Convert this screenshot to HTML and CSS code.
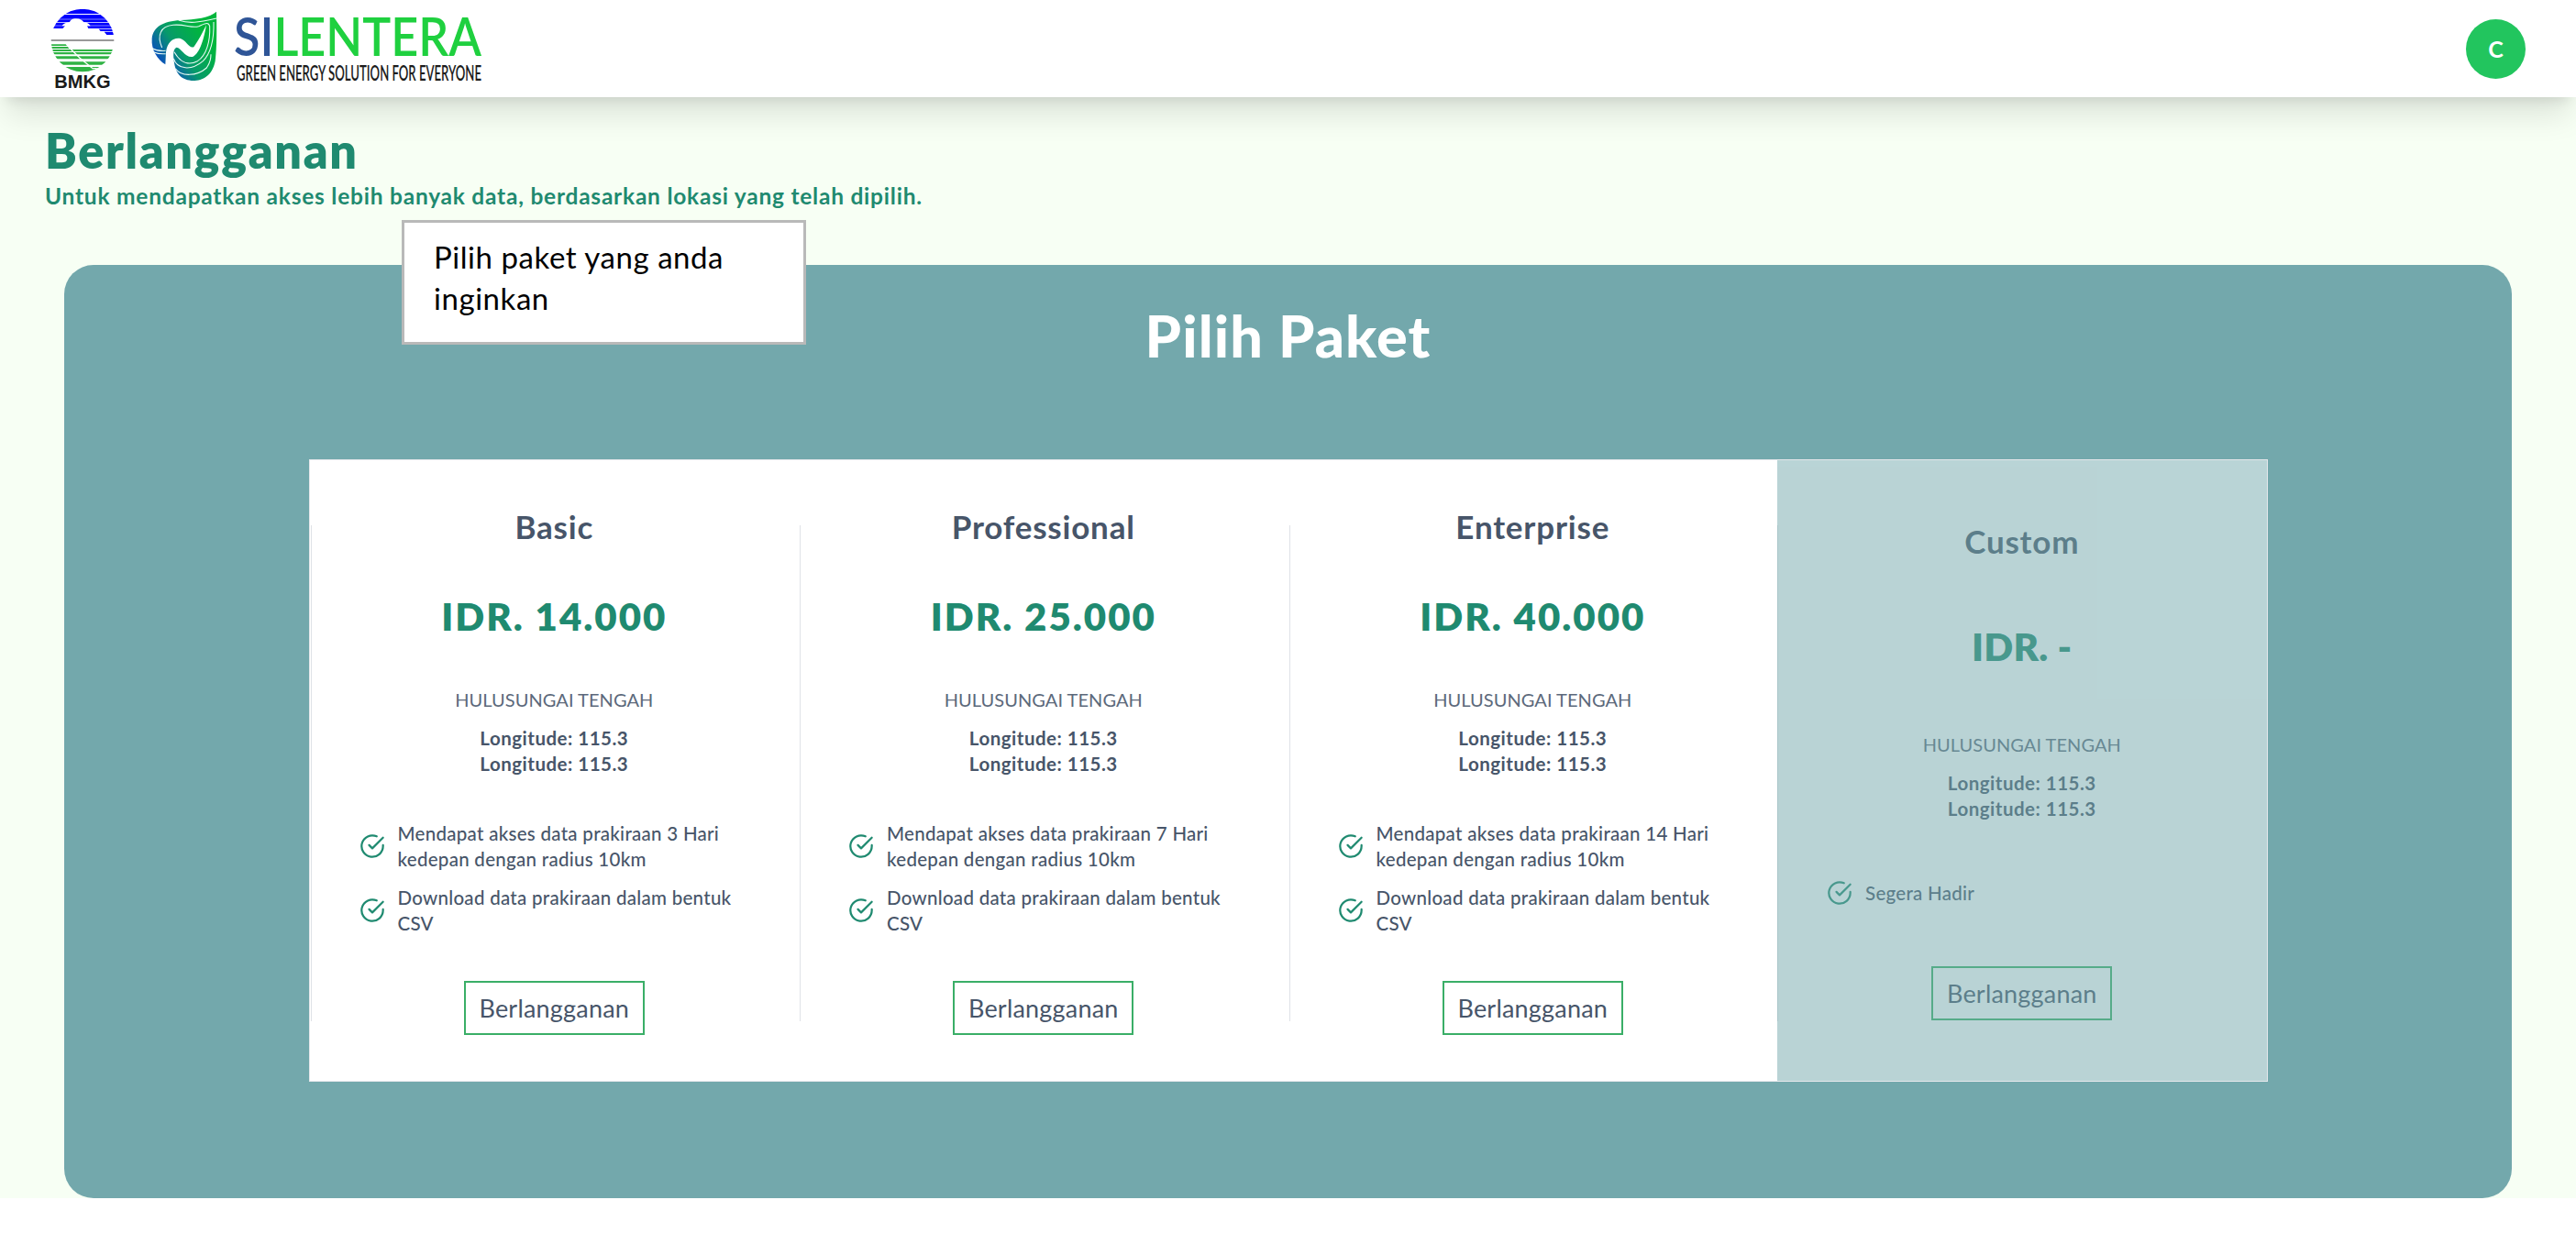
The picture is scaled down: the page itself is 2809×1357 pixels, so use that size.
FILE: index.html
```
<!DOCTYPE html>
<html lang="id">
<head>
<meta charset="utf-8">
<title>Berlangganan - Silentera</title>
<link rel="stylesheet" href="styles.css">
</head>
<body>
<svg class="defs" aria-hidden="true">
  <symbol id="check" viewBox="0 0 24 24" fill="none" stroke="currentColor" stroke-width="1.9" stroke-linecap="round" stroke-linejoin="round">
    <path d="M22 11.08V12a10 10 0 1 1-5.93-9.14"/>
    <path d="M22 4 12 14.01l-3-3"/>
  </symbol>
</svg>

<header class="topbar">
  <div class="brand">
    <svg class="bmkg" width="70" height="90" viewBox="0 0 210 270">
      <defs><clipPath id="globe"><circle cx="105" cy="108" r="103"/></clipPath></defs>
      <g clip-path="url(#globe)">
        <path fill="#0000ff" d="M0 5h210v16H0zM0 24h210v14H0zM0 40h210v8H0zM0 50h210v9H0zM0 61h48l-8 8H0zM120 61h90v8h-86zM158 71h52v7h-46zM176 80h34v10h-26z"/>
        <path fill="#fff" d="M38 61c4-9 16-11 25-13 4-10 14-11 22-11 12 0 20 5 24 12 12 0 18 5 22 12z"/>
        <path fill="#999" d="M0 105h210v6H0z"/>
        <path fill="#2fb344" d="M0 121h50l4 5H0zM0 129h58l7 6H0zM0 138h210v6H0zM0 147h210v7H0zM0 160h210v9H0zM0 178h210v10H0zM0 195h210v20H0z"/>
        <path fill="none" stroke="#fff" stroke-width="4" d="M56 126 96 166 138 200h72"/>
      </g>
      <text class="bmkg-name" x="13" y="263" textLength="184" lengthAdjust="spacingAndGlyphs">BMKG</text>
    </svg>
    <svg class="silentera" width="366" height="90" viewBox="0 0 366 90">
      <defs>
        <linearGradient id="leaf" x1="0.08" y1="0.85" x2="0.8" y2="0.3">
          <stop offset="0" stop-color="#0a3bd0"/>
          <stop offset="0.25" stop-color="#0a66a4"/>
          <stop offset="0.5" stop-color="#079a6a"/>
          <stop offset="1" stop-color="#00b63c"/>
        </linearGradient>
      </defs>
      <g transform="scale(.33333)">
        <path fill="url(#leaf)" d="M228 14C229 60 230 130 224 176C214 226 180 242 146 240C110 236 92 216 88 166C86 144 90 134 98 131C112 132 126 166 150 162C174 152 188 100 195 58C182 84 170 108 154 130C138 136 130 108 110 102C88 98 68 112 63 146L61 187C36 172 14 140 17 102C22 62 54 46 110 42C160 40 206 34 228 14Z"/>
        <g fill="none" stroke="#e9fbf5" stroke-width="3.2">
          <path d="M50 132C32 90 46 62 86 58C126 54 148 70 170 62C190 54 202 46 206 62C208 110 196 158 166 176C140 190 112 184 90 146"/>
          <path d="M104 42C140 54 166 50 228 36"/>
          <path d="M88 168C100 204 146 208 184 176C214 146 220 90 219 48"/>
          <path d="M94 200C112 228 164 226 196 198C202 188 210 180 210 154"/>
          <path d="M18 134Q36 144 62 142M22 146Q40 154 62 152"/>
        </g>
      </g>
      <text class="wordmark" x="95" y="53" textLength="270" lengthAdjust="spacingAndGlyphs"><tspan class="wordmark-si">SI</tspan>LENTERA</text>
      <text class="tagline" x="98" y="80" textLength="267" lengthAdjust="spacingAndGlyphs">GREEN ENERGY SOLUTION FOR EVERYONE</text>
    </svg>
  </div>
  <div class="avatar">C</div>
</header>

<main class="page">
  <h1 class="page-title">Berlangganan</h1>
  <p class="page-sub">Untuk mendapatkan akses lebih banyak data, berdasarkan lokasi yang telah dipilih.</p>

  <section class="panel">
    <div class="callout">Pilih paket yang anda<br>inginkan</div>
    <h2 class="panel-title">Pilih Paket</h2>
    <div class="plans">
      <article class="plan">
        <h3 class="plan-name">Basic</h3>
        <div class="price">IDR. 14.000</div>
        <div class="place"><div class="region">HULUSUNGAI TENGAH</div><div class="coord">Longitude: 115.3</div><div class="coord">Longitude: 115.3</div></div>
        <ul class="features">
          <li><svg class="tick"><use href="#check"/></svg><span>Mendapat akses data prakiraan 3 Hari<br>kedepan dengan radius 10km</span></li>
          <li><svg class="tick"><use href="#check"/></svg><span>Download data prakiraan dalam bentuk<br>CSV</span></li>
        </ul>
        <button class="buy">Berlangganan</button>
      </article>
      <article class="plan">
        <h3 class="plan-name">Professional</h3>
        <div class="price">IDR. 25.000</div>
        <div class="place"><div class="region">HULUSUNGAI TENGAH</div><div class="coord">Longitude: 115.3</div><div class="coord">Longitude: 115.3</div></div>
        <ul class="features">
          <li><svg class="tick"><use href="#check"/></svg><span>Mendapat akses data prakiraan 7 Hari<br>kedepan dengan radius 10km</span></li>
          <li><svg class="tick"><use href="#check"/></svg><span>Download data prakiraan dalam bentuk<br>CSV</span></li>
        </ul>
        <button class="buy">Berlangganan</button>
      </article>
      <article class="plan">
        <h3 class="plan-name">Enterprise</h3>
        <div class="price">IDR. 40.000</div>
        <div class="place"><div class="region">HULUSUNGAI TENGAH</div><div class="coord">Longitude: 115.3</div><div class="coord">Longitude: 115.3</div></div>
        <ul class="features">
          <li><svg class="tick"><use href="#check"/></svg><span>Mendapat akses data prakiraan 14 Hari<br>kedepan dengan radius 10km</span></li>
          <li><svg class="tick"><use href="#check"/></svg><span>Download data prakiraan dalam bentuk<br>CSV</span></li>
        </ul>
        <button class="buy">Berlangganan</button>
      </article>
      <article class="plan plan-soon">
        <h3 class="plan-name">Custom</h3>
        <div class="price">IDR. -</div>
        <div class="place"><div class="region">HULUSUNGAI TENGAH</div><div class="coord">Longitude: 115.3</div><div class="coord">Longitude: 115.3</div></div>
        <ul class="features">
          <li><svg class="tick"><use href="#check"/></svg><span>Segera Hadir</span></li>
        </ul>
        <button class="buy">Berlangganan</button>
      </article>
    </div>
  </section>
</main>
</body>
</html>
```
FILE: styles.css
```
* { box-sizing: border-box; }
body, h1, h2, h3, p, ul { margin: 0; padding: 0; }
body { background: #fff; color: #475569; font-family: Lato, sans-serif; }
.defs { display: none; }

.topbar {
  position: relative;
  z-index: 1;
  display: flex;
  justify-content: space-between;
  align-items: center;
  height: 106px;
  padding: 0 55px;
  background: #fff;
  box-shadow: 0 27px 33px -7px rgba(0, 0, 0, .1), 0 11px 13px -8px rgba(0, 0, 0, .1);
}
.brand { display: flex; align-items: center; gap: 35px; }
.brand svg { display: block; overflow: visible; }
.bmkg-name { font: bold 61px "Liberation Sans", sans-serif; fill: #1a1a1a; }
.wordmark { font: 600 57px Lato, sans-serif; fill: #1fd03f; }
.wordmark-si { fill: #2f5597; }
.tagline { font: 600 22px Lato, sans-serif; fill: #1c1c1c; }
.avatar {
  width: 65px;
  height: 65px;
  border-radius: 50%;
  background: #22c55e;
  color: #fff;
  font-size: 25px;
  font-weight: 700;
  line-height: 64px;
  text-align: center;
}

.page { height: 1201px; padding: 29px 70px 0; background: #f7fff4; }
.page-title {
  margin-left: -21px;
  color: #1f8a70;
  font-size: 52px;
  font-weight: 800;
  line-height: 59px;
  letter-spacing: 1.7px;
}
.page-sub {
  margin-left: -21px;
  color: #1f8a70;
  font-size: 24.5px;
  font-weight: 700;
  line-height: 40px;
  letter-spacing: .77px;
}

.panel {
  position: relative;
  height: 1018px;
  margin-top: 55px;
  padding-top: 41px;
  border-radius: 32px;
  background: #73a8ac;
}
.panel-title {
  color: #fff;
  font-size: 63px;
  font-weight: 900;
  line-height: 72px;
  letter-spacing: 1.1px;
  text-align: center;
}
.callout {
  position: absolute;
  left: 368px;
  top: -49px;
  width: 441px;
  height: 136px;
  padding: 15px 32px;
  border: 3px solid #b9b9b9;
  background: #fff;
  color: #000;
  font-size: 33px;
  line-height: 45px;
  letter-spacing: .55px;
}

.plans {
  display: flex;
  width: 2136px;
  height: 679px;
  margin: 99px auto 0;
  border: 1px solid #e5e7eb;
}
.plan {
  position: relative;
  flex: 1;
  display: flex;
  flex-direction: column;
  justify-content: space-evenly;
  align-items: center;
  padding: 0 54px;
  background: #fff;
}
.plan::before {
  content: "";
  position: absolute;
  left: 1px;
  top: 71px;
  width: 1px;
  height: 541px;
  background: #dfe2e7;
}
.plan-soon { opacity: .5; }
.plan-soon::before { left: 0; }
.plan-name { font-size: 35px; font-weight: 700; line-height: 44px; letter-spacing: .8px; }
.price { color: #1f8a70; font-size: 42px; font-weight: 800; line-height: 54px; letter-spacing: 2px; }
.plan-soon .price { letter-spacing: .2px; }
.place { margin-bottom: -2px; text-align: center; line-height: 28px; font-size: 20px; }
.region { margin-bottom: 14px; font-weight: 400; letter-spacing: .05px; color: #5c697b; }
.coord { font-size: 20.5px; font-weight: 700; letter-spacing: .5px; }
.features {
  display: flex;
  flex-direction: column;
  gap: 14px;
  width: 100%;
  list-style: none;
  font-size: 20.5px;
  font-weight: 500;
  line-height: 28px;
  letter-spacing: .28px;
}
.features li { display: flex; align-items: center; gap: 14px; white-space: nowrap; }
.tick { flex: none; width: 28px; height: 28px; color: #1f8a70; }
.buy {
  width: 197px;
  height: 59px;
  padding: 0;
  border: 2px solid #3aae67;
  background: none;
  color: #475569;
  font: 400 27px Lato, sans-serif;
  letter-spacing: .2px;
}
```
